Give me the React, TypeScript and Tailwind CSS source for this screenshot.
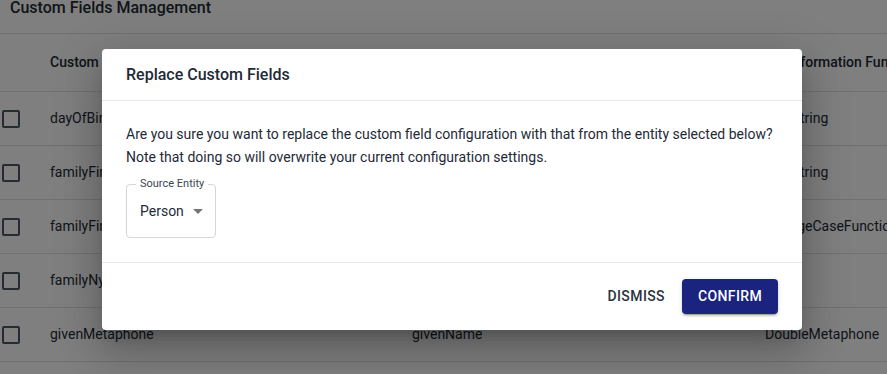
import {useState} from "react";

interface FieldRow {
    name: string,
    source: string,
    transform: string
}

const rows: FieldRow[] = [
    {name: "dayOfBirth", source: "dateOfBirth", transform: "TextString"},
    {name: "familyFirst", source: "familyName", transform: "TextString"},
    {name: "familyFirstLower", source: "familyName", transform: "ChangeCaseFunction"},
    {name: "familyNysiis", source: "familyName", transform: ""},
    {name: "givenMetaphone", source: "givenName", transform: "DoubleMetaphone"},
];

const font = {fontFamily: "Roboto, 'Noto Sans', sans-serif"};

function Checkbox() {
    return <div className="h-[18px] w-[18px] rounded-[2px] border-2 border-[#4a5763]"/>;
}

function Page() {
    return (
        <div className="w-[1100px] bg-white text-[#222b33]">
            <div className="h-[34px] border-b border-[#e0e0e0] px-[10px] pt-[1px] text-[16px] font-medium leading-[14px]">
                Custom Fields Management
            </div>
            <div className="flex h-[58px] items-center border-b border-[#e0e0e0] text-[14px] font-medium">
                <div className="w-[50px]"/>
                <div className="w-[362px]">Custom Field Name</div>
                <div className="w-[353px]">Source Field</div>
                <div>Transformation Function</div>
            </div>
            {rows.map((row) => (
                <div key={row.name} className="flex h-[54px] items-center border-b border-[#e0e0e0] text-[14px]">
                    <div className="w-[50px] pl-[2px]"><Checkbox/></div>
                    <div className="w-[362px]">{row.name}</div>
                    <div className="w-[353px]">{row.source}</div>
                    <div>{row.transform}</div>
                </div>
            ))}
        </div>
    );
}

export default function App() {
    const [entity] = useState("Person");

    return (
        <div className="relative h-[374px] w-[887px] overflow-hidden whitespace-nowrap" style={font}>
            <Page/>
            <div className="absolute inset-0 bg-black/50"/>
            <div className="absolute left-[102px] top-[49px] w-[700px] rounded-[4px] bg-white text-[#1f2a37] shadow-[0_11px_15px_-7px_rgba(0,0,0,0.2),0_24px_38px_3px_rgba(0,0,0,0.14),0_9px_46px_8px_rgba(0,0,0,0.12)]">
                <div className="flex h-[52px] items-center border-b border-[#e8e8e8] px-6 text-[16px] font-medium">
                    Replace Custom Fields
                </div>
                <div className="px-6 pb-6 pt-[22px]">
                    <p className="text-[14px] leading-[23px]">
                        Are you sure you want to replace the custom field configuration with that from the entity selected below?
                        <br/>
                        Note that doing so will overwrite your current configuration settings.
                    </p>
                    <div className="relative mt-[15px] flex h-[54px] w-[90px] items-center rounded-[4px] border border-[#d6d6d6] pl-[13px]">
                        <span className="absolute -top-[8px] left-[9px] bg-white px-[4px] text-[11px] leading-[14px] text-[#3a4652]">
                            Source Entity
                        </span>
                        <span className="text-[14px] text-[#1f2a37]">{entity}</span>
                        <span className="ml-[9px] mt-[1px] h-0 w-0 border-x-[5px] border-t-[5px] border-x-transparent border-t-[#757575]"/>
                    </div>
                </div>
                <div className="flex h-[68px] items-center justify-end gap-[9px] border-t border-[#e8e8e8] px-6">
                    <button type="button" className="px-2 py-[6px] text-[14px] font-medium tracking-[0.4px] text-[#2a3440]">
                        DISMISS
                    </button>
                    <button
                        type="button"
                        className="h-[35px] w-[96px] rounded-[4px] bg-[#1a237e] text-[14px] font-medium tracking-[0.4px] text-white shadow-[0_3px_1px_-2px_rgba(0,0,0,0.2),0_2px_2px_0_rgba(0,0,0,0.14),0_1px_5px_0_rgba(0,0,0,0.12)]">
                        CONFIRM
                    </button>
                </div>
            </div>
        </div>
    );
}
